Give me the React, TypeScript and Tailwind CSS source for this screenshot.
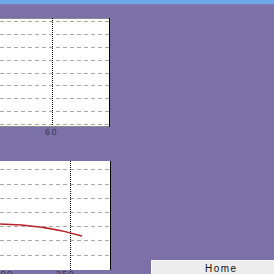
import React from "react";

const gray = "#a9a9a9";

function Chart1() {
  const ys = Array.from({ length: 9 }, (_, i) => 2.7 + 12.95 * i);
  return (
    <svg width={110} height={109} className="block">
      <rect x={0} y={0} width={110} height={109} fill="#ffffff" />
      <line x1={0} y1={0.5} x2={110} y2={0.5} stroke="#8a8a8a" strokeWidth={1} />
      {ys.map((y, i) => (
        <line key={i} x1={0} y1={Math.round(y) + 0.5} x2={109} y2={Math.round(y) + 0.5} stroke={gray} strokeWidth={1} strokeDasharray="4 3" />
      ))}
      <line x1={52.5} y1={0} x2={52.5} y2={109} stroke="#000" strokeWidth={1} strokeDasharray="1 1" />
      <line x1={0} y1={108.5} x2={110} y2={108.5} stroke="#8a8a8a" strokeWidth={1} />
      <line x1={109.5} y1={0} x2={109.5} y2={109} stroke="#000" strokeWidth={1} />
    </svg>
  );
}

function Chart2() {
  const ys = Array.from({ length: 7 }, (_, i) => 8.3 + 14.23 * i);
  return (
    <svg width={111} height={109} className="block">
      <rect x={0} y={0} width={111} height={109} fill="#ffffff" />
      {ys.map((y, i) => (
        <line key={i} x1={0} y1={Math.round(y) + 0.5} x2={110} y2={Math.round(y) + 0.5} stroke={gray} strokeWidth={1} strokeDasharray="4 3" />
      ))}
      <line x1={70.5} y1={0} x2={70.5} y2={109} stroke="#000" strokeWidth={1} strokeDasharray="1 1" />
      <path d="M0 63 C30 63.5 55 67 82 75" fill="none" stroke="#b8232a" strokeWidth={1.5} />
      <line x1={110.5} y1={0} x2={110.5} y2={109} stroke="#000" strokeWidth={1} />
    </svg>
  );
}

export default function App() {
  return (
    <div
      className="w-[274px] h-[274px] overflow-hidden bg-[#7b70a8] flex flex-col"
      style={{ fontFamily: '"Liberation Sans", Arial, sans-serif' }}
    >
      <div className="h-[4px] w-full bg-[#6ea8ea] shrink-0" />
      <div className="h-[2px] w-full bg-[#8078ad] shrink-0" />
      <div className="mt-[12px] shrink-0">
        <Chart1 />
      </div>
      <div className="h-[9px] mt-[1px] pl-[45px] text-[9px] leading-[9px] tracking-[1.5px] text-[#3a3550] shrink-0">
        60
      </div>
      <div className="mt-[24px] flex flex-row items-start shrink-0">
        <div className="flex flex-col w-[111px] shrink-0">
          <Chart2 />
          <div className="flex flex-row h-[9px] text-[9px] leading-[9px] tracking-[1.5px] text-[#3a3550]">
            <span className="ml-[-6px]">100</span>
            <span className="ml-[42px]">250</span>
          </div>
        </div>
        <div className="ml-[40px] mt-[99px] w-[138px] h-[18px] shrink-0 bg-[#ececec] border-t border-l border-[#f8f8f8] flex justify-center pt-[3px]">
          <span className="text-[10px] leading-[10px] tracking-[1.5px] pl-[1.5px] text-[#111]">Home</span>
        </div>
      </div>
    </div>
  );
}
